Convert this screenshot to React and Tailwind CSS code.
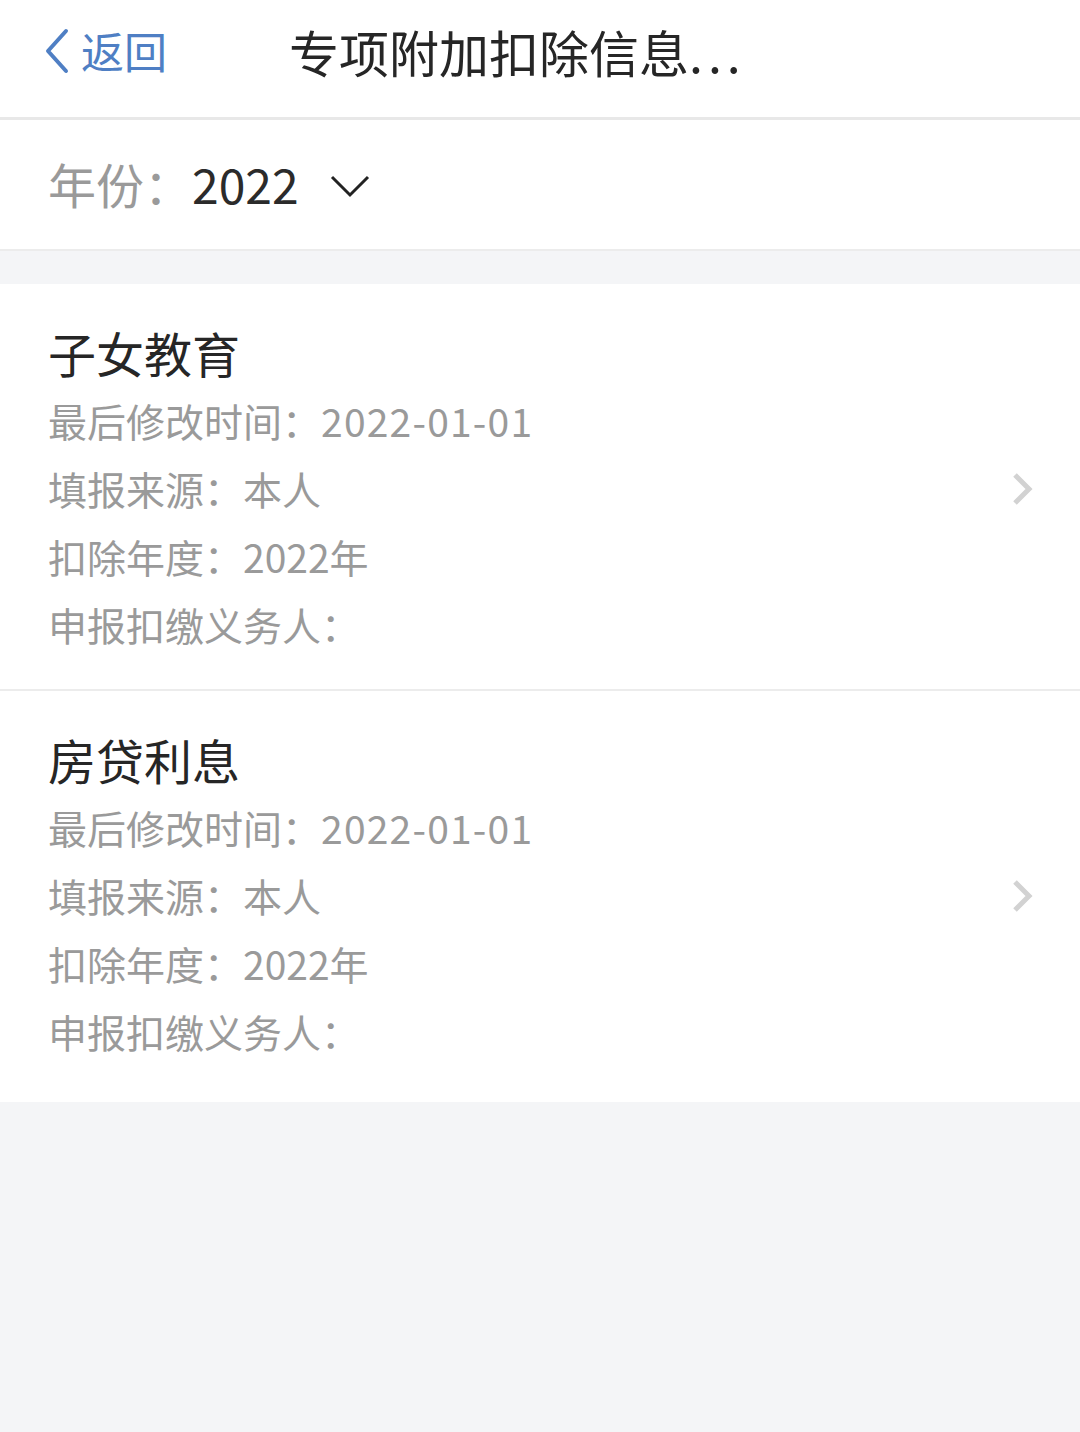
import React from 'react';

const records = [
  { title: '子女教育', date: '2022-01-01', source: '本人', year: '2022年', pb: 'pb-[31px]' },
  { title: '房贷利息', date: '2022-01-01', source: '本人', year: '2022年', pb: 'pb-[37px]' },
];

function BackIcon() {
  return (
    <svg width="28" height="46" viewBox="0 0 28 46" fill="none">
      <polyline points="23,3 5,23 23,43" stroke="#4f7fc4" strokeWidth="4" strokeLinecap="round" strokeLinejoin="round" />
    </svg>
  );
}

function ChevronDown() {
  return (
    <svg width="40" height="24" viewBox="0 0 40 24" fill="none">
      <polyline points="2,3 20,21 38,3" stroke="#222" strokeWidth="3" strokeLinejoin="miter" />
    </svg>
  );
}

function ChevronRight() {
  return (
    <svg width="22" height="34" viewBox="0 0 22 34" fill="none">
      <polyline points="3,3 17,17 3,31" stroke="#d2d2d2" strokeWidth="5" strokeLinejoin="miter" />
    </svg>
  );
}

function Row({ label, value, wide }) {
  return (
    <div className="flex h-[68px] items-center text-[39px] leading-none text-[#9a9a9a]">
      <span>{label}：</span>
      <span className={wide ? 'tracking-[1.2px]' : ''}>{value}</span>
    </div>
  );
}

export default function App() {
  return (
    <div className="min-h-screen bg-[#f4f5f7] font-['Noto_Sans_CJK_SC','Noto_Sans',sans-serif]">
      {/* Header */}
      <header className="flex h-[120px] items-center border-b-[3px] border-[#e8e8e8] bg-white pb-[16px] pl-[43px]">
        <div className="flex items-center gap-[10px]">
          <BackIcon />
          <span className="text-[43px] leading-none text-[#4f7fc4]">返回</span>
        </div>
        <h1 className="ml-[122px] text-[50px] leading-none text-[#262626]">
          专项附加扣除信息<span className="tracking-[5px]">...</span>
        </h1>
      </header>

      {/* Year selector */}
      <div className="flex h-[131px] items-center border-b-2 border-[#ececec] bg-white pl-[48px] pb-[4px]">
        <span className="text-[48px] leading-none text-[#9a9a9a]">年份：</span>
        <span className="text-[48px] leading-none text-[#2b2b2b]">2022</span>
        <span className="ml-[31px] mt-[6px]">
          <ChevronDown />
        </span>
      </div>

      <div className="h-[33px]" />

      {/* Records */}
      <div className="bg-white">
        {records.map((r, i) => (
          <div
            key={r.title}
            className={`flex items-center justify-between pl-[48px] pr-[46px] pt-[41px] ${r.pb} ${i === 0 ? 'border-b-2 border-[#ececec]' : ''}`}
          >
            <div className="flex flex-col">
              <div className="mb-[8px] flex h-[53px] items-center text-[48px] leading-none text-[#262626]">{r.title}</div>
              <Row label="最后修改时间" value={r.date} wide />
              <Row label="填报来源" value={r.source} />
              <Row label="扣除年度" value={r.year} />
              <Row label="申报扣缴义务人" value="" />
            </div>
            <span className="mb-[6px]">
              <ChevronRight />
            </span>
          </div>
        ))}
      </div>
    </div>
  );
}
